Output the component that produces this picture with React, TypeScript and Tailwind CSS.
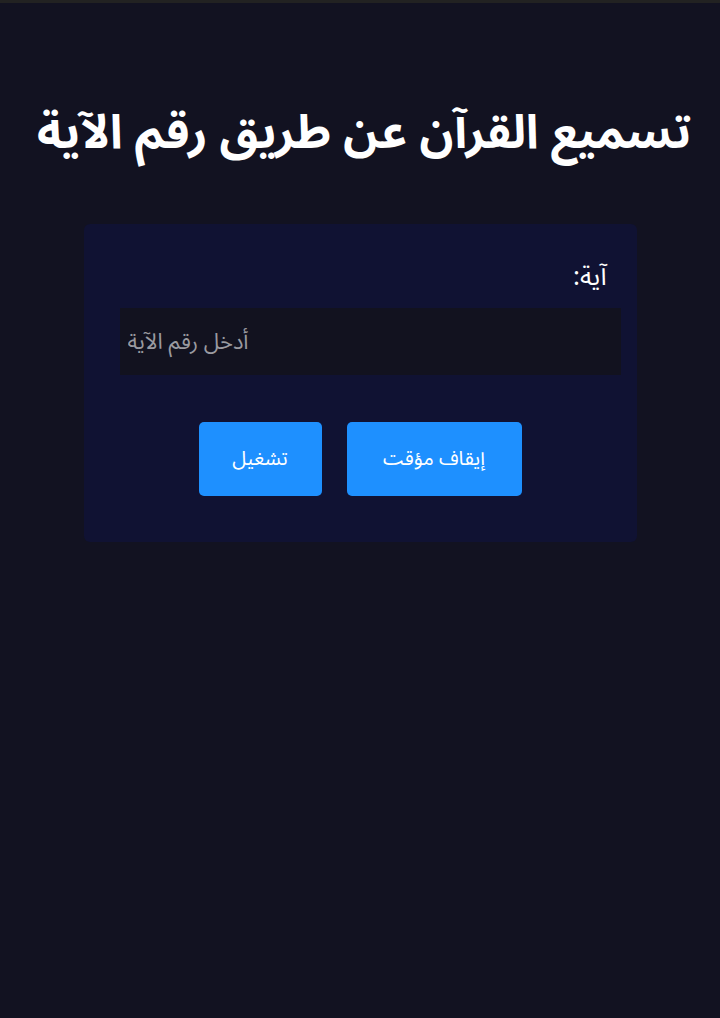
export default function App() {
  return (
    <div
      dir="rtl"
      className="min-h-[1018px] w-full bg-[#121221] text-white flex flex-col items-center"
      style={{ fontFamily: '"Noto Sans Arabic", "DejaVu Sans", sans-serif' }}
    >
      <div className="h-[3px] w-full bg-[#222222]" />
      <h1 className="mt-[96px] pl-[8px] text-[47px] leading-[68px] font-bold text-center whitespace-nowrap">
        تسميع القرآن عن طريق رقم الآية
      </h1>
      <div className="mt-[57px] w-[553px] rounded-md bg-[#101233] pt-[36px] pb-[46px] pr-[16px] pl-[16px]">
        <label className="block pr-[14px] text-[26px] leading-[34px]">آية:</label>
        <input
          type="text"
          dir="ltr"
          placeholder="أدخل رقم الآية"
          className="mt-[14px] block w-[501px] h-[67px] bg-[#12121f] px-[8px] text-left text-[22px] text-white placeholder:text-[#9a9aa0] outline-none"
        />
        <div className="mt-[47px] flex justify-center gap-[25px]">
          <button className="w-[175px] h-[74px] rounded-[5px] bg-[#1e90ff] text-[20px]">
            إيقاف مؤقت
          </button>
          <button className="w-[123px] h-[74px] rounded-[5px] bg-[#1e90ff] text-[20px]">
            تشغيل
          </button>
        </div>
      </div>
    </div>
  );
}
